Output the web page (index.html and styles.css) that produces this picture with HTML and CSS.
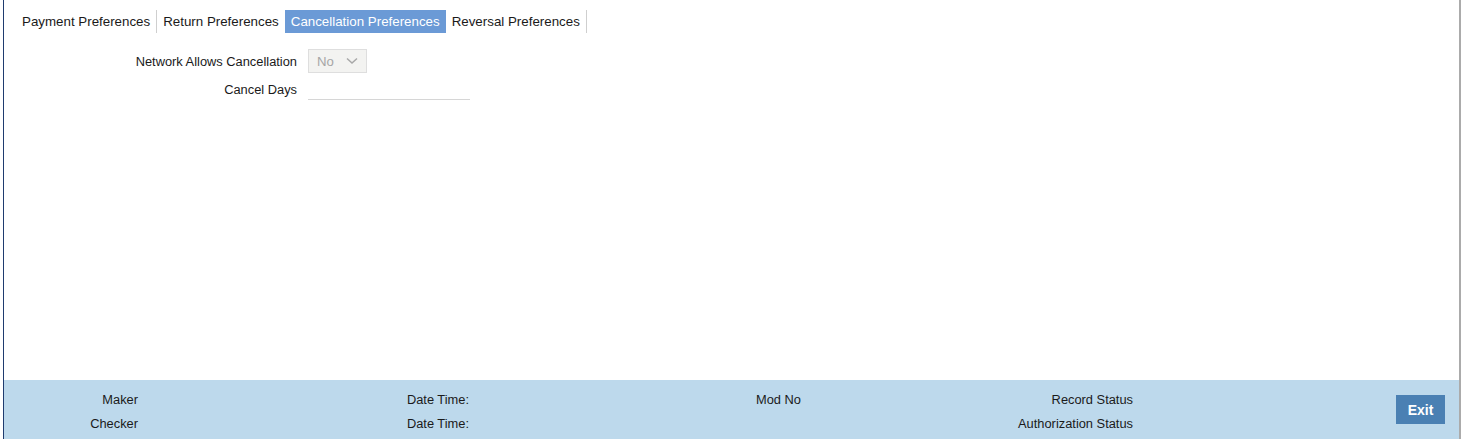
FILE: index.html
```html
<!DOCTYPE html>
<html>
<head>
<meta charset="utf-8">
<link rel="stylesheet" href="styles.css">
</head>
<body>
<div class="frame">
  <div class="main">
    <div class="tabs">
      <div class="tab">Payment Preferences</div>
      <div class="tab">Return Preferences</div>
      <div class="tab active">Cancellation Preferences</div>
      <div class="tab">Reversal Preferences</div>
    </div>
    <div class="form">
      <div class="row">
        <div class="label">Network Allows Cancellation</div>
        <div class="select">
          <span class="select-text">No</span>
          <svg class="chev" width="12" height="8" viewBox="0 0 12 8"><path d="M1 1.5 L6 6 L11 1.5" fill="none" stroke="#a8a8a8" stroke-width="1.5"/></svg>
        </div>
      </div>
      <div class="row">
        <div class="label">Cancel Days</div>
        <div class="input"></div>
      </div>
    </div>
  </div>
  <div class="footer">
    <div class="grid">
      <div class="flabel">Maker</div><div></div>
      <div class="flabel">Date Time:</div><div></div>
      <div class="flabel">Mod No</div><div></div>
      <div class="flabel">Record Status</div><div></div>
      <div class="flabel">Checker</div><div></div>
      <div class="flabel">Date Time:</div><div></div>
      <div></div><div></div>
      <div class="flabel">Authorization Status</div><div></div>
    </div>
    <button class="exit">Exit</button>
  </div>
</div>
</body>
</html>
```
FILE: styles.css
```css
html, body {
  margin: 0;
  padding: 0;
  background: #ffffff;
}
body {
  font-family: "Liberation Sans", Arial, sans-serif;
  color: #1a1a1a;
}
.frame {
  margin-left: 3px;
  width: 1455px;
  height: 439px;
  border-left: 1px solid #1f3b6f;
  border-right: 2px solid #ababab;
  display: flex;
  flex-direction: column;
}
.main {
  flex: 1;
  padding-top: 10px;
}
.tabs {
  display: flex;
  padding-left: 12px;
}
.tab {
  font-size: 13.33px;
  height: 23px;
  line-height: 23px;
  padding: 0 6px;
  border-right: 1px solid #cfcfcf;
  color: #1a1a1a;
}
.tab:nth-child(2) {
  border-right: none;
}
.tab.active {
  background: #6b9ad6;
  color: #ffffff;
  border-right: none;
}
.form {
  padding-top: 16px;
  display: flex;
  flex-direction: column;
  gap: 4px;
}
.row {
  display: flex;
  align-items: center;
  height: 24px;
}
.label {
  width: 293px;
  text-align: right;
  font-size: 12.85px;
  padding-right: 11px;
}
.select {
  width: 57px;
  height: 22px;
  border: 1px solid #dedede;
  background: #f3f3f1;
  display: flex;
  align-items: center;
  box-sizing: content-box;
}
.select-text {
  font-size: 13.2px;
  color: #a6a6a6;
  padding-left: 8px;
  width: 29px;
}
.chev {
  display: block;
}
.input {
  align-self: flex-start;
  width: 162px;
  height: 23px;
  border-bottom: 1px solid #d6d6d6;
  box-sizing: border-box;
}
.footer {
  height: 59px;
  background: #bdd9ec;
  display: flex;
  align-items: center;
}
.grid {
  display: grid;
  grid-template-columns: 134px 197px 134px 198px 134px 198px 134px 198px;
  grid-auto-rows: 24px;
  align-self: flex-start;
  padding-top: 8px;
  font-size: 12.85px;
}
.flabel {
  text-align: right;
  line-height: 24px;
  white-space: nowrap;
  color: #1a1a1a;
}
.exit {
  margin-left: auto;
  margin-right: 14px;
  width: 49px;
  height: 29px;
  background: #4a80b3;
  border: none;
  color: #ffffff;
  font-family: "Liberation Sans", Arial, sans-serif;
  font-weight: bold;
  font-size: 14px;
  padding: 0;
}
```
